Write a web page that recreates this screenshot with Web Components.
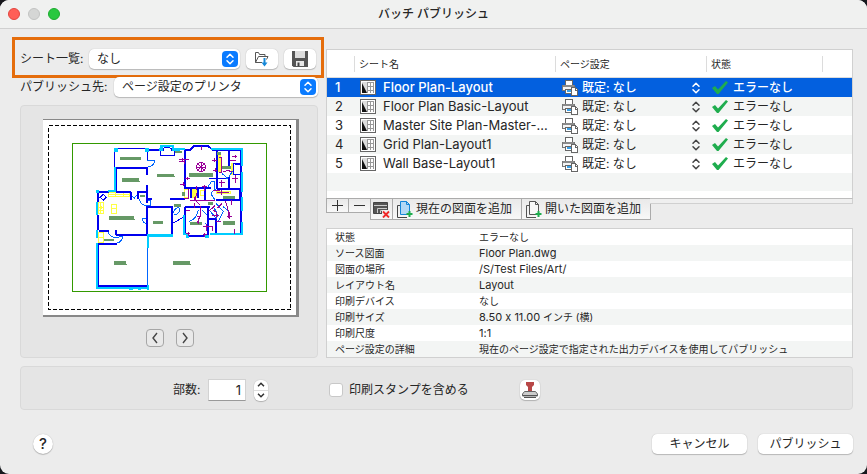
<!DOCTYPE html>
<html lang="ja">
<head>
<meta charset="utf-8">
<title>バッチ パブリッシュ</title>
<style>
  html { background: #16181d; }
  body { margin: 0; font: 12px/16px Inter, "Noto Sans CJK JP", sans-serif; font-feature-settings: "calt" 0; color: #262626; }
</style>
</head>
<body>
<publish-window>
  <span slot="title">バッチ パブリッシュ</span>
  <sheet-source slot="left"></sheet-source>
  <plan-preview slot="left"></plan-preview>
  <sheet-table slot="right"></sheet-table>
  <sheet-tools slot="right"></sheet-tools>
  <sheet-details slot="right"></sheet-details>
  <print-options slot="bottom"></print-options>
  <dialog-actions slot="bottom"></dialog-actions>
</publish-window>

<script>
const define = (name, html, setup) => {
  const tpl = document.createElement('template');
  tpl.innerHTML = '<style>*{box-sizing:border-box}button,input,select{font:inherit;color:inherit;margin:0}svg{display:block;flex:none}</style>' + html;
  customElements.define(name, class extends HTMLElement {
    connectedCallback() {
      if (this.shadowRoot) return;
      this.attachShadow({ mode: 'open' }).append(tpl.content.cloneNode(true));
      if (setup) setup(this, this.shadowRoot);
    }
  });
};

const sheetIcon = `<svg width="16" height="15" viewBox="0 0 16 15" aria-hidden="true">
  <rect x=".5" y=".5" width="15" height="14" fill="#fff" stroke="#666"/>
  <path d="M2 2h5v11H2z" fill="#ddd"/><path d="M2 3l5 10H2z" fill="#111"/>
  <path d="M7.500 2v11M10.500 2v11M13.500 2v11M7 2.500h7M7 6.500h7M7 10.500h7" stroke="#999" fill="none"/>
</svg>`;
const printerIcon = `<svg width="16" height="16" viewBox="0 0 16 16" shape-rendering="crispEdges" aria-hidden="true">
  <path d="M3.500 5.500v-5h7v5" fill="#fff" stroke="#666"/>
  <path d="M.5 5.500h12v5H.5z" fill="#f4f4f4" stroke="#777"/>
  <path d="M1 5h11v2H1z" fill="#8a8a8a"/>
  <path d="M3.500 9.500h6v4h-6z" fill="#fff" stroke="#666"/><path d="M5 10h4v2H5z" fill="#3aa0e8"/>
  <path d="M9.500 7.500h4l2 2v6h-6z" fill="#fff" stroke="#666"/><path d="M13 8v2h2" fill="none" stroke="#666"/>
</svg>`;
const checkIcon = `<svg width="16" height="13" viewBox="0 0 16 13" aria-hidden="true"><path d="M0 7l3-2 3 3.500L14 0l2 1.500L6.500 13H5z" fill="#1fad4e"/></svg>`;

define('publish-window', `
<style>
  :host { display: flex; flex-direction: column; min-height: 100vh; box-sizing: border-box; background: #ececec; border-radius: 9px; overflow: hidden; }
  header { display: grid; grid-template-columns: 1fr auto 1fr; align-items: center; height: 29px; padding: 0 8px; background: #f0f1f0; border-bottom: 1px solid #d0d0d0; }
  .lights { display: flex; gap: 8px; }
  .lights button { width: 12px; height: 12px; padding: 0; border: 1px solid #e2463f; border-radius: 50%; background: #ff5f57; }
  .lights .min { background: #d5d6d5; border-color: #c2c3c2; }
  .lights .max { background: #28c840; border-color: #1dab2f; }
  h1 { margin: 0; font: inherit; font-weight: 500; }
  main { display: grid; grid-template-columns: minmax(312px, 312fr) minmax(400px, 527fr); gap: 2px; padding: 8px 14px 8px 12px; }
  .left { display: flex; flex-direction: column; }
  .right { display: flex; flex-direction: column; padding-top: 12px; min-width: 0; }
  footer { display: flex; flex-direction: column; flex: 1; padding: 0 14px 20px 20px; }
</style>
<header>
  <div class="lights"><button aria-label="閉じる"></button><button class="min" aria-label="しまう"></button><button class="max" aria-label="拡大"></button></div>
  <h1><slot name="title"></slot></h1>
</header>
<main><div class="left"><slot name="left"></slot></div><div class="right"><slot name="right"></slot></div></main>
<footer><slot name="bottom"></slot></footer>`);

define('pop-up', `
<style>
  :host { display: grid; flex: 1; min-width: 0; height: 20px; font-size: 12px; }
  select, svg { grid-area: 1 / 1; }
  select { appearance: none; width: 100%; height: 100%; padding: 0 24px 0 8px; border: 0; border-radius: 5px; background: #fff; box-shadow: 0 0 1px #0004, 0 1px 1px #0003; line-height: 20px; }
  svg { justify-self: end; align-self: center; margin-right: 2px; pointer-events: none; }
  rect { fill: #0a7bff; } path { stroke: #fff; }
  :host([plain]) { height: 19px; }
  :host([plain]) select { padding: 0 20px 0 0; background: none; box-shadow: none; border-radius: 0; line-height: 19px; }
  :host([plain]) rect { fill: none; }
  :host([plain]) path { stroke: var(--chevron, #444); }
</style>
<select><option></option></select>
<svg width="16" height="16" viewBox="0 0 16 16" aria-hidden="true"><rect width="16" height="16" rx="4"/><path d="M5 6.200l3-3 3 3M5 9.800l3 3 3-3" fill="none" stroke-width="1.500" stroke-linecap="round" stroke-linejoin="round"/></svg>`,
(host, root) => {
  root.querySelector('option').textContent = host.getAttribute('value');
  root.querySelector('select').setAttribute('aria-label', host.getAttribute('label'));
});

define('tool-button', `
<style>
  :host { display: inline-flex; }
  button { display: flex; align-items: center; justify-content: center; width: 32px; height: 20px; padding: 0; border: 0; border-radius: 5px; background: #fff; box-shadow: 0 0 1px #0004, 0 1px 1px #0003; }
  :host([square]) button { width: 20px; }
  :host([wide]) button { width: 95px; }
  :host([round]) button { width: 20px; border-radius: 50%; font-size: 15px; font-weight: 500; }
</style>
<button><slot></slot></button>`,
(host, root) => { if (host.hasAttribute('label')) root.querySelector('button').setAttribute('aria-label', host.getAttribute('label')); });

define('sheet-source', `
<style>
  :host { display: block; }
  .row { display: flex; align-items: center; }
  .list { height: 41px; padding: 2px 5px 0; border: 3px solid #e56d0c; gap: 6px; }
  .list span { width: 63px; white-space: nowrap; }
  .target { height: 20px; padding: 0 6px 0 8px; gap: 6px; margin-top: -1px; }
  .target span { white-space: nowrap; width: 88px; }
</style>
<div class="row list"><span>シート一覧:</span><pop-up label="シート一覧" value="なし"></pop-up>
  <tool-button label="シート一覧を読み込み"><svg width="16" height="16" viewBox="0 0 16 16"><path d="M1.500 11.500V1.500h3l1 2h5.500v2M1.500 11.500l3-6h9.500l-1.500 3M1.500 11.500H8" fill="none" stroke="#555"/><path d="M10.500 7v7" stroke="#1688d8" stroke-width="2"/><path d="M7.500 11.500h6l-3 4z" fill="#1688d8"/></svg></tool-button>
  <tool-button label="シート一覧を保存"><svg width="16" height="16" viewBox="0 0 16 16"><path d="M0 0h16v16H1.500L0 14.500z" fill="#555"/><path d="M3 0h10v7H3z" fill="#ddd"/><path d="M4 10h8v5H4z" fill="#e8e8e8"/><path d="M5.500 11.500h2V15h-2z" fill="#444"/></svg></tool-button>
</div>
<div class="row target"><span>パブリッシュ先:</span><pop-up label="パブリッシュ先" value="ページ設定のプリンタ"></pop-up></div>`);

define('plan-preview', `
<style>
  :host { display: flex; flex-direction: column; align-items: center; flex: 1; margin: 8px 6px 0 8px; padding: 13px 18px 10px 22px; box-sizing: border-box; background: #e5e5e5; border: 1px solid #d9d9d9; border-radius: 4px; }
  svg.plan { width: 256px; height: 198px; }
  nav { display: flex; gap: 12px; margin: 12px 2px 0 0; }
  nav button { display: grid; place-items: center; width: 18px; height: 18px; padding: 0; border: 1px solid #a6a6a6; border-radius: 4px; background: #e9e9e9; }
</style>
<svg class="plan" viewBox="9 27 768 594" shape-rendering="crispEdges" fill="none" role="img" aria-label="図面プレビュー">
  <path d="M9 27h768v594H9z" fill="#888"/><path d="M9 30h759v585H9z" fill="#fff"/>
  <path d="M25.500 46.500h726v552h-726z" stroke="#000" stroke-width="3" stroke-dasharray="12 6"/>
  <path d="M97.500 100.500h582v444h-582z" stroke="#390" stroke-width="3"/>
  <g fill="#ff4">
    <path d="M183 288h3v9h-3zM456 237h15v28h-15zM535 135h9v52h-9zM573 160h9v36h-9z"/>
  </g>
  <path d="M205 247h64v13h-64zM205 254h64M226 247v13M250 247v13M213 283h17v28h-17zM213 294h17M175 277h15v32h-15zM175 293h15M182 277v32M174 367h17v31h-17zM174 382h17M480 241h15v14h-15zM530 243h40v8h-40zM433 238h12v25h-12zM538 125v65M174 300h18" stroke="#ff4" stroke-width="3"/>
  <path d="M321 150h22v8q-5 12-20 12M273 258l10 6 9-10M297 267q6 18 21 20M319 271h13v14h-13M321 324h-15q3 16 15 18M205 366q4 15 20 16l23-2q-3 18-20 20M396 318q6-24 20-26M402 315q18-2 18-22M500 237l14-22h10v22M525 268q-22-20 2-30M545 205h20l12-22M545 190l22 18M501 292l28 34q8-17-9-34M528 280l22 25-14 28M475 300q-4 26-28 35M486 300l18 18M321 375v153M549 290q20 12 20 28M495 340l16 11" stroke="#06f" stroke-width="3"/>
  <path d="M228.500 116H321M223.500 114v57M323 120v30M319 171v24M319 225v50M229.500 172v72" stroke="#00e" stroke-width="3"/>
  <path d="M321 121h37M228 174h93M321 171v24M321 225v54M177 246h30M228 246h45M273 246v24M291 246h30M294 246v21M174 249v27M174 315v45M321 288v87M321 291h74M395 288v84M390 267h45M318 267h18M435 120v117M436 120h15l10-11h45l12 11h87M435 234h78M530 120v117M567 122v48M567 200v37M602 120v183M528 269h75M531 236h72M435 290h75M452 236v29M475 236v29M495 236v34M435 290v85M504 290v87M505 327h24M529 327v45M602 300v72M438 378h67M177 363h30M228 360v15M228 375h93M175 402h56M174 405v125M174 529h148" stroke="#00e" stroke-width="6"/>
  <path d="M579 160h23v33h-23zM585 163h15v27M180 262l9-9 10 9-9 9zM570 238h28v28M398 340l32-18M507 206h50" stroke="#00e" stroke-width="3"/>
  <path d="M361 112h39v24h-39z" fill="#fff"/><path d="M360 124v12h42v-12M369 123v-7l5-4h14l5 4v7" stroke="#00e" stroke-width="3"/>
  <path fill="#0cf" d="M222 114h12v12h-12zM315 114h12v12h-12zM222 171h6v75h-24v-6h18zM168 240h9v9h-9zM168 276h6v39h-6zM168 360h6v24h-6zM168 399h6v132h153v6H168zM321 525h6v15h-6zM267 534h12v6h-12zM294 534h9v6h-9zM360 105h42v9h18v8h-24v-11h-27v11h-12v-9h3zM420 114h15v6h-15zM513 114h96v54h-6v-48h-90zM603 186h6v60h-6zM603 261h6v42h-6zM603 336h6v39h-99v-6h93zM321 372h78v9h-72v33h-6zM429 315h6v54h12v15h-9v-9h-9zM495 375h12v9h-12z"/>
  <path fill="#696" d="M240 141h63v9h-63zM246 204h51v9h3v3h-54zM351 192h51v6h3v3h-54zM207 318h75v9h3v3h-78zM339 333h30v9h-30zM222 453h36v9h3v3h-39zM399 453h51v9h3v3h-54zM192 387h30v6h-30zM450 336h36v9h-36zM549 333h36v12h-36zM447 189h72v12h-72zM300 255h15v6h-15zM545 168h27v9h-27zM405 123h20v6h-20zM402 282h20v9h-20zM550 258h35v8h-35zM505 276h15v8h-15zM427 246h8v12h-8zM532 125h12v9h-12z"/>
  <circle cx="483" cy="171" r="14" stroke="#909" stroke-width="3"/>
  <path d="M473 161l20 20M493 161l-20 20M483 157v28M470 171h27M483 107v14M433 149v12M418 147h28M418 153h15M426 143v12M435 205h15M443 200v11M421 222h15M429 215v12M470 228v11M523 145v12M516 152h15M518 180h14M525 175v11M536 142h9v45h-9M549 186l14-5 14 5M570 150h18M586 135v10M577 140h15M577 205h18M586 196v24M545 210v22M538 218h18M444 238v27h-12M470 250l-5 20 14 15M462 260v14M450 272h75M462 278v15M492 224v20M485 230h15M530 248h38M545 240v15M520 240h20M555 272l8 20 4 31M560 318h15M567 306v21M573 270v15M480 288v30l-8 20M437 300h12M470 318h14M475 328v14M438 370h12M444 366v12M488 373h14M493 368v12M490 350h30M500 342v20M516 351v12M515 316h22M528 306v18M519 300l13 9M528 333h14M584 357v15M532 295l14-15M506 304l20-18" stroke="#909" stroke-width="3"/>
</svg>
<nav>
  <button aria-label="前へ"><svg width="10" height="12" viewBox="0 0 10 12"><path d="M7 1L3 6l4 5" fill="none" stroke="#444" stroke-width="1.400"/></svg></button>
  <button aria-label="次へ"><svg width="10" height="12" viewBox="0 0 10 12"><path d="M3 1l4 5-4 5" fill="none" stroke="#444" stroke-width="1.400"/></svg></button>
</nav>`);

define('sheet-table', `
<style>
  :host { display: block; height: 150px; box-sizing: border-box; border: 1px solid #d0d0d0; border-bottom-color: #bdbdbd; overflow: hidden;
    background: repeating-linear-gradient(#f3f5f4 0 19px, #fff 19px 38px) 0 8px; }
  table { width: 100%; border-collapse: separate; border-spacing: 0; table-layout: fixed; }
  th { height: 28px; padding: 0; background: #fff; border-bottom: 1px solid #dcdcdc; font-weight: 400; font-size: 10px; text-align: left; }
  th div { height: 16px; padding-left: 4px; border-left: 1px solid #dcdcdc; line-height: 16px; }
  th:first-child div { border: 0; }
  td { height: 19px; padding: 0; line-height: 19px; white-space: nowrap; }
  td:first-child { padding-left: 8px; font-size: 13px; }
  tr:nth-child(even) { background: #f3f5f4; } tr:nth-child(odd) { background: #fff; }
  tbody tr.on { background: #0360df; color: #fff; font-weight: 500; --chevron: #fff; }
  .cell { display: flex; align-items: center; gap: 7px; height: 19px; padding-left: 6px; }
  .cell.setup { gap: 4px; padding-left: 7px; } .cell.state { gap: 5px; }
  .name { font-size: 13px; overflow: hidden; text-overflow: ellipsis; }
</style>
<table>
  <colgroup><col style="width:27px"><col style="width:201px"><col style="width:151px"><col style="width:116px"><col></colgroup>
  <thead><tr><th><div></div></th><th><div>シート名</div></th><th><div>ページ設定</div></th><th><div>状態</div></th><th><div></div></th></tr></thead>
  <tbody></tbody>
</table>`,
(host, root) => {
  const names = ['Floor Plan-Layout', 'Floor Plan Basic-Layout', 'Master Site Plan-Master-...', 'Grid Plan-Layout1', 'Wall Base-Layout1'];
  root.querySelector('tbody').innerHTML = names.map((n, i) => `<tr${i ? '' : ' class="on"'}><td>${i + 1}</td>
    <td><div class="cell">${sheetIcon}<span class="name">${n}</span></div></td>
    <td><div class="cell setup">${printerIcon}<pop-up plain label="ページ設定" value="既定: なし"></pop-up></div></td>
    <td colspan="2"><div class="cell state">${checkIcon}<span>エラーなし</span></div></td></tr>`).join('');
});

define('sheet-tools', `
<style>
  :host { display: flex; align-items: flex-start; height: 30px; margin-top: -1px; }
  button { display: flex; align-items: center; justify-content: center; gap: 3px; height: 22px; padding: 0 9px 0 4px; margin-right: -1px; border: 1px solid #ababab; background: linear-gradient(#e9e9e9, #f8f8f8); white-space: nowrap; }
  .small { width: 23px; height: 15px; padding: 0; } .icon { width: 23px; padding: 0; }
  .edge { flex: 1; height: 6px; border: solid #d0d0d0; border-width: 1px 1px 1px 0; border-top-color: #bdbdbd; background: #efefef; }
</style>
<button class="small" aria-label="追加"><svg width="11" height="11" viewBox="0 0 11 11"><path d="M5.500 0v11M0 5.500h11" stroke="#333"/></svg></button>
<button class="small" aria-label="削除"><svg width="11" height="11" viewBox="0 0 11 11"><path d="M0 5.500h11" stroke="#333"/></svg></button>
<button class="icon" aria-label="すべて削除"><svg width="17" height="17" viewBox="0 0 17 17"><path d="M.5 1.500h14v11H.5z" fill="#555" stroke="#444"/><path d="M1 4.500h13M4.500 12V7.500H14M7.500 12V9.500H14" fill="none" stroke="#ccc"/><path d="M9 9h8v8H9z" fill="#f0f0f0"/><path d="M10 10.500l6 6M16 10.500l-6 6" stroke="#f02828" stroke-width="1.800"/></svg></button>
<button><svg width="16" height="17" viewBox="0 0 16 17"><path d="M3 4.500H.5v12H10" fill="none" stroke="#444"/><path d="M3.500.5h6l3 3v10h-9z" fill="#b4d8f5" stroke="#1585d8"/><path d="M9.500.5v3h3" fill="none" stroke="#1585d8"/><path d="M12.500 10v6M9.500 13h6" stroke="#1fad4e" stroke-width="2"/></svg>現在の図面を追加</button>
<button><svg width="16" height="17" viewBox="0 0 16 17"><path d="M3 4.500H.5v12H10" fill="none" stroke="#555"/><path d="M3.500.5h6l3 3v10h-9z" fill="#f8f8f8" stroke="#555"/><path d="M9.500.5v3h3" fill="none" stroke="#555"/><path d="M12.500 10v6M9.500 13h6" stroke="#1fad4e" stroke-width="2"/></svg>開いた図面を追加</button>
<div class="edge"></div>`);

define('sheet-details', `
<style>
  :host { display: block; border: 1px solid #d0d0d0; font-size: 10px; }
  table { width: 100%; border-collapse: collapse; table-layout: fixed; background: #fff; }
  tr:nth-child(even) { background: #f3f5f4; }
  th, td { height: 16px; padding: 0 0 0 8px; font-weight: 400; text-align: left; line-height: 16px; white-space: nowrap; }
  th { width: 144px; }
  .en { font-size: 11px; }
</style>
<table><tbody>
  <tr><th>状態</th><td>エラーなし</td></tr>
  <tr><th>ソース図面</th><td class="en">Floor Plan.dwg</td></tr>
  <tr><th>図面の場所</th><td class="en">/S/Test Files/Art/</td></tr>
  <tr><th>レイアウト名</th><td class="en">Layout</td></tr>
  <tr><th>印刷デバイス</th><td>なし</td></tr>
  <tr><th>印刷サイズ</th><td><span class="en">8.50 x 11.00</span> インチ (横)</td></tr>
  <tr><th>印刷尺度</th><td class="en">1:1</td></tr>
  <tr><th>ページ設定の詳細</th><td>現在のページ設定で指定された出力デバイスを使用してパブリッシュ</td></tr>
</tbody></table>`);

define('print-options', `
<style>
  :host { display: grid; grid-template-columns: minmax(308px, 308fr) minmax(400px, 525fr); align-items: center; height: 44px; box-sizing: border-box; padding-top: 4px; background: #e5e5e5; border: 1px solid #d9d9d9; border-radius: 4px; }
  div { display: flex; align-items: center; }
  .copies label { width: 35px; margin-left: 152px; }
  input.num { appearance: none; width: 38px; height: 22px; padding: 0 4px; border: 1px solid #d2d2d2; border-bottom-color: #999; background: #fff; text-align: right; font-size: 13px; }
  .step { flex-direction: column; width: 14px; margin-left: 8px; border-radius: 6px; box-shadow: 0 0 1px #0005, 0 1px 1px #0003; overflow: hidden; background: #ddd; gap: 1px; }
  .step button { display: grid; place-items: center; width: 14px; height: 10px; padding: 0; border: 0; background: #fff; }
  .stamp input { appearance: none; width: 14px; height: 14px; border: 1px solid #c8c8c8; border-radius: 3px; background: #fff; }
  .stamp label { display: flex; align-items: center; gap: 6px; width: 191px; }
</style>
<div class="copies"><label for="n">部数:</label><input id="n" class="num" value="1">
  <div class="step"><button aria-label="増やす"><svg width="8" height="5" viewBox="0 0 8 5"><path d="M1 4.200l3-3 3 3" fill="none" stroke="#333" stroke-width="1.500"/></svg></button><button aria-label="減らす"><svg width="8" height="5" viewBox="0 0 8 5"><path d="M1 .8l3 3 3-3" fill="none" stroke="#333" stroke-width="1.500"/></svg></button></div>
</div>
<div class="stamp"><label><input type="checkbox">印刷スタンプを含める</label>
  <tool-button square label="印刷スタンプ設定"><svg width="16" height="16" viewBox="0 0 16 16"><path d="M4 0h8v3l-2 2v4H6V5L4 3z" fill="#b84747"/><path d="M2.500 9.500h11l2 2.500v2H.5v-2z" fill="#ccc" stroke="#666"/><path d="M1 13.500h14M2 15.500h12" stroke="#555"/></svg></tool-button>
</div>`);

define('dialog-actions', `
<style>
  :host { display: flex; align-items: center; justify-content: space-between; padding: 24px 0 0 13px; }
  div { display: flex; gap: 11px; }
</style>
<tool-button round label="ヘルプ">?</tool-button>
<div><tool-button wide>キャンセル</tool-button><tool-button wide>パブリッシュ</tool-button></div>`);
</script>
</body>
</html>
